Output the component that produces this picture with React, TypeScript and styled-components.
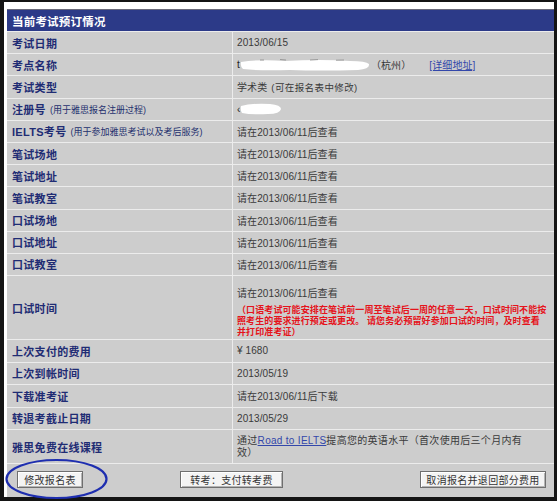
import React from 'react';
import styled, { createGlobalStyle } from 'styled-components';

const Global = createGlobalStyle`
  html, body { margin: 0; padding: 0; background: #fff; }
  body { font-family: "Liberation Sans", "Noto Sans CJK SC", sans-serif; }
  * { box-sizing: border-box; }
`;

const Frame = styled.div`
  position: relative;
  width: 557px;
  height: 501px;
  border-style: solid;
  border-color: #141414;
  border-width: 2px 3px 4px 4px;
  padding: 7px 0 0 3px;
  background: #fff;
`;

const Table = styled.div`
  display: grid;
  grid-template-columns: 225px 1fr;
  grid-template-rows: 21px repeat(11, 21.2px) 63px repeat(4, 21.5px) 33px 1fr;
  gap: 1px;
  height: 488px;
  background: #ececec;
  border-top: 1px solid #6a6a7a;
`;

const Header = styled.div`
  grid-column: 1 / -1;
  background: #2c3a88;
  color: #fff;
  font-weight: 700;
  font-size: 11.5px;
  letter-spacing: 0.2px;
  display: flex;
  align-items: center;
  padding-left: 5px;
`;

const Label = styled.div`
  background: #cdcdcd;
  color: #1f2c74;
  font-weight: 700;
  font-size: 11px;
  letter-spacing: 0.3px;
  display: flex;
  align-items: center;
  padding-left: 5px;
  white-space: nowrap;
`;

const Note = styled.span`
  font-size: 9px;
  font-weight: 400;
  letter-spacing: 0;
  margin-left: 4px;
  color: #24306e;
`;

const Value = styled.div<{ $stack?: boolean }>`
  background: #cdcdcd;
  color: #3a3a3a;
  font-size: 10px;
  letter-spacing: 0.1px;
  display: flex;
  flex-direction: ${p => (p.$stack ? 'column' : 'row')};
  align-items: ${p => (p.$stack ? 'flex-start' : 'center')};
  padding: ${p => (p.$stack ? '11px 0 0 4px' : '0 0 0 4px')};
  white-space: nowrap;
`;

const TwoLine = styled.div`
  background: #cdcdcd;
  color: #3a3a3a;
  font-size: 10px;
  letter-spacing: 0.3px;
  line-height: 12px;
  display: flex;
  align-items: center;
  padding-left: 4px;
  white-space: nowrap;
`;

const Small = styled.span`
  font-size: 9.5px;
  margin-left: 4px;
  letter-spacing: 0.4px;
`;

const Link = styled.a`
  color: #3347aa;
  text-decoration: underline;
  cursor: pointer;
`;

const AddrLink = styled(Link)`
  margin-left: 18px;
`;

const Line = styled.div`
  line-height: 14px;
`;

const RedNote = styled.div`
  margin-top: 4px;
  color: #e5131b;
  font-size: 9px;
  font-weight: 700;
  line-height: 11px;
  letter-spacing: 0.1px;
`;

const Redact = styled.svg`
  display: inline-block;
  vertical-align: middle;
`;

const Dark = styled.span`
  color: #222;
`;

const ButtonRow = styled.div`
  grid-column: 1 / -1;
  background: #cdcdcd;
  display: flex;
  align-items: center;
  padding: 0 8px 2px 10px;
`;

const Button = styled.button<{ $w: number; $gap?: number; $auto?: boolean }>`
  width: ${p => p.$w}px;
  height: 17px;
  margin-left: ${p => (p.$auto ? 'auto' : `${p.$gap ?? 0}px`)};
  padding: 0;
  font-family: "Liberation Sans", "Noto Sans CJK SC", sans-serif;
  font-size: 10px;
  letter-spacing: 0.3px;
  color: #333;
  background: #f4f4f4;
  border: 1px solid #6f6f6f;
  box-shadow: inset 1px 1px 0 #fff, inset -1px -1px 0 #b4b4b4;
  display: flex;
  align-items: center;
  justify-content: center;
`;

const Oval = styled.svg`
  position: absolute;
  left: 1px;
  top: 454px;
  overflow: visible;
  pointer-events: none;
`;

const pending = '请在2013/06/11后查看';

export default function App() {
  return (
    <>
      <Global />
      <Frame>
        <Table>
          <Header>当前考试预订情况</Header>

          <Label>考试日期</Label>
          <Value>2013/06/15</Value>

          <Label>考点名称</Label>
          <Value>
            <Dark>t</Dark>
            <Redact width="131" height="14" viewBox="0 0 131 14">
              <path d="M1 4 Q20 1 45 3 Q80 1 110 3 Q126 3 129 6 Q130 11 118 12 Q80 13 50 12 Q20 13 3 11 Q0 8 1 4 Z" fill="#fff" />
              <path d="M20 2 L24 2 M40 1.5 L46 2 M70 2 L78 1.6 M96 2.2 L104 2" stroke="#8a8a8a" strokeWidth="0.8" />
            </Redact>
            （杭州）
            <AddrLink>[详细地址]</AddrLink>
          </Value>

          <Label>考试类型</Label>
          <Value>
            学术类<Small>(可在报名表中修改)</Small>
          </Value>

          <Label>
            注册号<Note>(用于雅思报名注册过程)</Note>
          </Label>
          <Value>
            <Dark>‹</Dark>
            <Redact width="42" height="12" viewBox="0 0 42 12">
              <path d="M1 3 Q12 0 30 1 Q41 2 41 6 Q40 11 28 11 Q12 12 2 10 Q0 7 1 3 Z" fill="#fff" />
            </Redact>
          </Value>

          <Label>
            IELTS考号<Note>(用于参加雅思考试以及考后服务)</Note>
          </Label>
          <Value>{pending}</Value>

          <Label>笔试场地</Label>
          <Value>{pending}</Value>
          <Label>笔试地址</Label>
          <Value>{pending}</Value>
          <Label>笔试教室</Label>
          <Value>{pending}</Value>
          <Label>口试场地</Label>
          <Value>{pending}</Value>
          <Label>口试地址</Label>
          <Value>{pending}</Value>
          <Label>口试教室</Label>
          <Value>{pending}</Value>

          <Label>口试时间</Label>
          <Value $stack>
            <Line>{pending}</Line>
            <RedNote>
              （口语考试可能安排在笔试前一周至笔试后一周的任意一天，口试时间不能按
              <br />
              照考生的要求进行预定或更改。 请您务必预留好参加口试的时间，及时查看
              <br />
              并打印准考证）
            </RedNote>
          </Value>

          <Label>上次支付的费用</Label>
          <Value>¥ 1680</Value>
          <Label>上次到帐时间</Label>
          <Value>2013/05/19</Value>
          <Label>下载准考证</Label>
          <Value>请在2013/06/11后下载</Value>
          <Label>转退考截止日期</Label>
          <Value>2013/05/29</Value>

          <Label>雅思免费在线课程</Label>
          <TwoLine>
            <div>
              通过<Link>Road to IELTS</Link>提高您的英语水平（首次使用后三个月内有
              <br />
              效）
            </div>
          </TwoLine>

          <ButtonRow>
            <Button $w={66}>修改报名表</Button>
            <Button $w={103} $gap={97}>转考：支付转考费</Button>
            <Button $w={126} $auto>取消报名并退回部分费用</Button>
          </ButtonRow>
        </Table>
        <Oval width="106" height="44" viewBox="0 0 106 44">
          <ellipse cx="51.5" cy="23" rx="50" ry="19" fill="none" stroke="#1e2eb0" strokeWidth="2.2" />
        </Oval>
      </Frame>
    </>
  );
}
